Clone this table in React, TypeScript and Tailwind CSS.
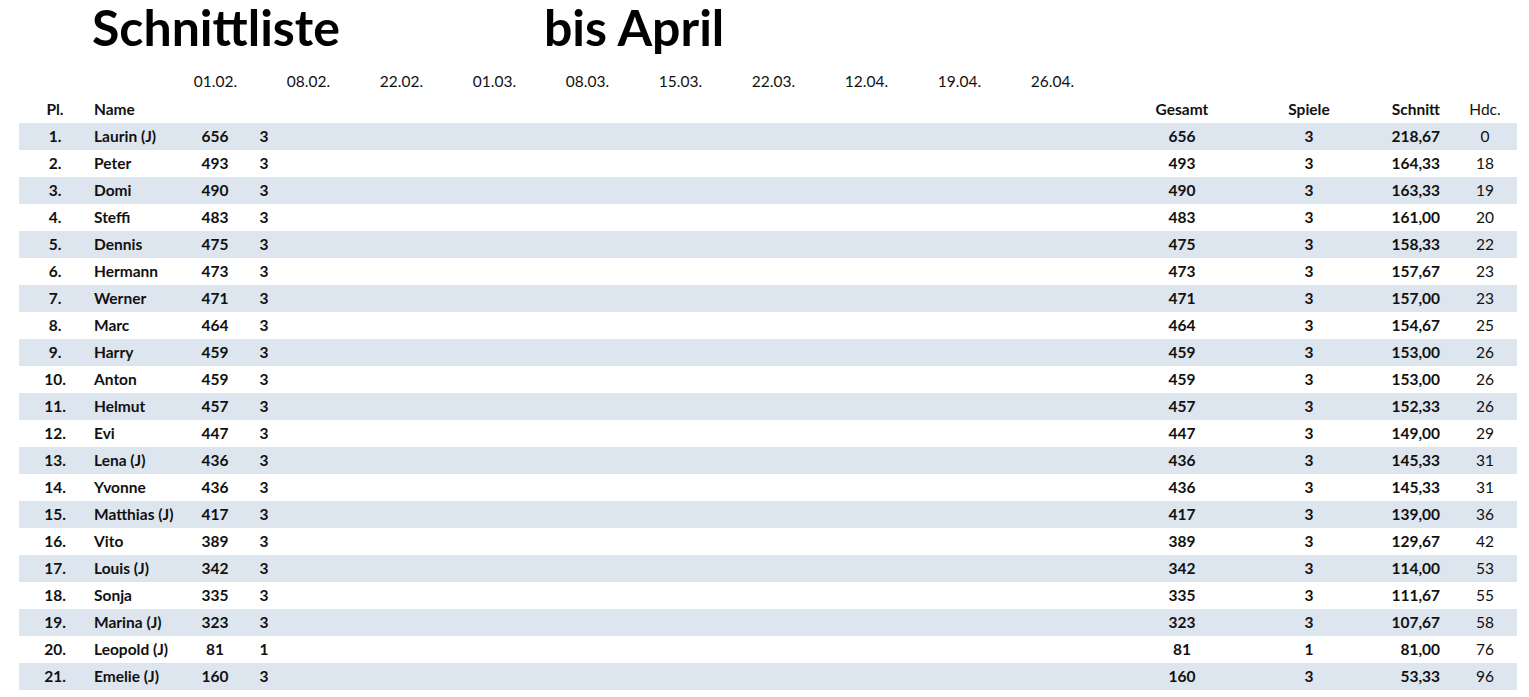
const dates = ['01.02.', '08.02.', '22.02.', '01.03.', '08.03.', '15.03.', '22.03.', '12.04.', '19.04.', '26.04.'];

type Row = { name: string; score: number; games: number; avg: string; hdc: number };

const rows: Row[] = [
  { name: 'Laurin (J)', score: 656, games: 3, avg: '218,67', hdc: 0 },
  { name: 'Peter', score: 493, games: 3, avg: '164,33', hdc: 18 },
  { name: 'Domi', score: 490, games: 3, avg: '163,33', hdc: 19 },
  { name: 'Steffi', score: 483, games: 3, avg: '161,00', hdc: 20 },
  { name: 'Dennis', score: 475, games: 3, avg: '158,33', hdc: 22 },
  { name: 'Hermann', score: 473, games: 3, avg: '157,67', hdc: 23 },
  { name: 'Werner', score: 471, games: 3, avg: '157,00', hdc: 23 },
  { name: 'Marc', score: 464, games: 3, avg: '154,67', hdc: 25 },
  { name: 'Harry', score: 459, games: 3, avg: '153,00', hdc: 26 },
  { name: 'Anton', score: 459, games: 3, avg: '153,00', hdc: 26 },
  { name: 'Helmut', score: 457, games: 3, avg: '152,33', hdc: 26 },
  { name: 'Evi', score: 447, games: 3, avg: '149,00', hdc: 29 },
  { name: 'Lena (J)', score: 436, games: 3, avg: '145,33', hdc: 31 },
  { name: 'Yvonne', score: 436, games: 3, avg: '145,33', hdc: 31 },
  { name: 'Matthias (J)', score: 417, games: 3, avg: '139,00', hdc: 36 },
  { name: 'Vito', score: 389, games: 3, avg: '129,67', hdc: 42 },
  { name: 'Louis (J)', score: 342, games: 3, avg: '114,00', hdc: 53 },
  { name: 'Sonja', score: 335, games: 3, avg: '111,67', hdc: 55 },
  { name: 'Marina (J)', score: 323, games: 3, avg: '107,67', hdc: 58 },
  { name: 'Leopold (J)', score: 81, games: 1, avg: '81,00', hdc: 76 },
  { name: 'Emelie (J)', score: 160, games: 3, avg: '53,33', hdc: 96 },
];

export default function App() {
  return (
    <div className="min-h-screen w-[1529px] bg-white text-[#111] font-['Lato',sans-serif]">
      {/* title */}
      <div className="flex h-[68px] items-start pt-[1px] text-[50px] font-bold leading-[52px] text-black">
        <span className="ml-[92px]">Schnittliste</span>
        <span className="ml-[204px]">bis April</span>
      </div>

      {/* dates */}
      <div className="flex h-[28px] items-center pl-[169px] text-[15.5px]">
        {dates.map((d) => (
          <div key={d} className="w-[93px] text-center">
            {d}
          </div>
        ))}
      </div>

      {/* header */}
      <div className="mx-[12px] ml-[19px] flex h-[27px] items-center text-[15.5px] font-bold">
        <div className="w-[72px] text-center">Pl.</div>
        <div className="w-[99px] pl-[3px]">Name</div>
        <div className="w-[50px]" />
        <div className="w-[48px]" />
        <div className="flex-1" />
        <div className="w-[80px] text-center">Gesamt</div>
        <div className="ml-[47px] w-[80px] text-center">Spiele</div>
        <div className="ml-[11px] w-[80px] text-right">Schnitt</div>
        <div className="ml-[15px] w-[60px] text-center font-normal">Hdc.</div>
        <div className="w-[2px]" />
      </div>

      {/* rows */}
      <div className="mx-[12px] ml-[19px]">
        {rows.map((r, i) => (
          <div
            key={r.name}
            className={`flex h-[27px] items-center pt-[1px] text-[15.5px] font-bold ${i % 2 === 0 ? 'bg-[#dde5ef]' : 'bg-white'}`}
          >
            <div className="w-[72px] text-center">{i + 1}.</div>
            <div className="w-[99px] pl-[3px] whitespace-nowrap">{r.name}</div>
            <div className="w-[50px] text-center">{r.score}</div>
            <div className="w-[48px] text-center">{r.games}</div>
            <div className="flex-1" />
            <div className="w-[80px] text-center">{r.score}</div>
            <div className="ml-[47px] w-[80px] text-center">{r.games}</div>
            <div className="ml-[11px] w-[80px] text-right">{r.avg}</div>
            <div className="ml-[15px] w-[60px] text-center font-normal">{r.hdc}</div>
            <div className="w-[2px]" />
          </div>
        ))}
      </div>
    </div>
  );
}
